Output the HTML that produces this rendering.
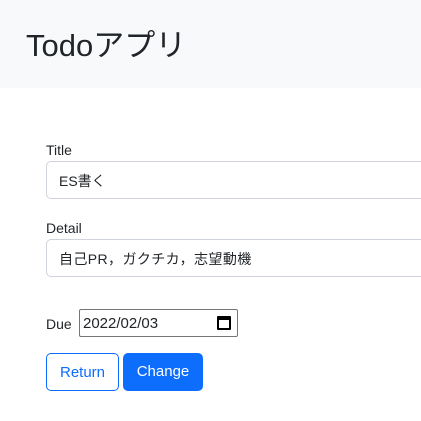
<!DOCTYPE html>
<html><head><meta charset="utf-8"><style>
*{box-sizing:border-box;margin:0;padding:0}
body{width:421px;height:421px;overflow:hidden;background:#fff;font-family:"Liberation Sans","Noto Sans CJK JP",sans-serif;color:#212529;position:relative}
.hd{position:absolute;left:0;top:0;width:421px;height:88px;background:#f8f9fa}
.hd h1{position:absolute;left:26px;top:26px;font-size:31px;font-weight:400;line-height:40px}
.lbl{position:absolute;left:46px;font-size:14px}
.inp{position:absolute;left:46px;width:400px;height:38px;border:1px solid #ced4da;border-radius:5px;font-size:14px;padding:1px 0 0 12px;line-height:36px}
.due{position:absolute;left:79px;top:309px;width:159px;height:28px;border:1px solid #767676;border-radius:2px;font-size:15px;line-height:27px;padding-left:3px}
.cal{position:absolute;right:6px;top:6px;width:14px;height:14px;border:2px solid #000;border-top-width:4px;border-radius:1px}
.btn{position:absolute;top:353px;height:38px;border-radius:5px;font-size:15px;line-height:38px;text-align:center}
</style></head><body>
<div class="hd"><h1>Todoアプリ</h1></div>
<div class="lbl" style="top:142px">Title</div>
<div class="inp" style="top:161px">ES書く</div>
<div class="lbl" style="top:220px">Detail</div>
<div class="inp" style="top:239px;letter-spacing:0.4px">自己PR，ガクチカ，志望動機</div>
<div class="lbl" style="top:316px">Due</div>
<div class="due">2022/02/03<div class="cal"></div></div>
<div class="btn" style="left:46px;width:73px;border:1px solid #0d6efd;color:#0d6efd;line-height:36px;padding-top:1px">Return</div>
<div class="btn" style="left:123px;width:80px;background:#0d6efd;color:#fff">Change</div>
</body></html>
